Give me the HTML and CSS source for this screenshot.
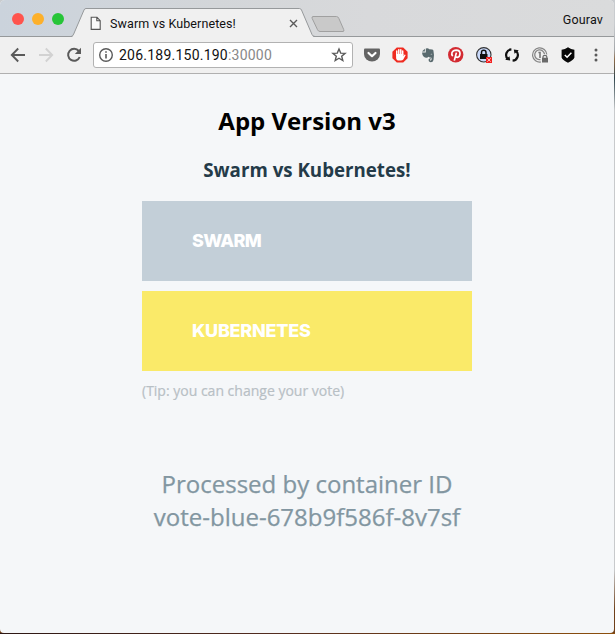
FILE: index.html
```html
<!DOCTYPE html>
<html lang="en">
<head>
<meta charset="utf-8">
<title>Swarm vs Kubernetes!</title>
<link rel="stylesheet" href="styles.css">
</head>
<body>
<div class="window">
  <header class="tabstrip">
    <div class="lights"><i class="light red"></i><i class="light amber"></i><i class="light green"></i></div>
    <div class="tab">
      <svg class="tab-shape" width="244" height="29" viewBox="0 0 244 29"><path d="M1 29Q2 28 3 25.5L13 2Q13.5 .5 15 .5H228.4Q229.8 .5 230.5 2L241 26.5Q242 29 243 29Z" fill="#f0f0f0"/><path d="M0 28.5Q1.7 28.5 2.7 26L13 2Q13.6 .5 15 .5H228.4Q229.8 .5 230.5 2L241 26.5Q242 28.5 244 28.5" fill="none" stroke="#96999b"/></svg>
      <svg class="page-icon" width="12" height="15" viewBox="0 0 12 15"><path d="M1.2 1.2H7L10.2 4.6V13.4H1.2ZM6.8 1.2V4.8H10.2" fill="#fafafa" stroke="#555" stroke-width="1.1"/></svg>
      <span class="tab-title">Swarm vs Kubernetes!</span>
      <svg class="close" width="9" height="9" viewBox="0 0 9 9"><path d="M1 1L8 8M8 1L1 8" stroke="#5a5a5a" stroke-width="1.4"/></svg>
    </div>
    <svg class="new-tab" width="35" height="17" viewBox="0 0 35 17"><path d="M2 .5H25.5Q27 .5 27.8 2.3L32.7 13.5Q33.5 15.5 32 15.5H9Q7.3 15.5 6.5 13.7L1.2 2.5Q.5 .5 2 .5Z" fill="#c9c9c9" stroke="#a0a0a0"/></svg>
    <span class="profile">Gourav</span>
  </header>
  <nav class="toolbar">
    <svg class="nav-icon" width="28" height="20" viewBox="0 0 28 20"><path d="M25 10H12M18.2 3.5L11.8 10L18.2 16.5" fill="none" stroke="#5a5a5a" stroke-width="1.9"/></svg>
    <svg class="nav-icon" width="28" height="20" viewBox="0 0 28 20"><path d="M11 10H24M17.8 3.5L24.2 10L17.8 16.5" fill="none" stroke="#d2d2d2" stroke-width="1.9"/></svg>
    <svg class="nav-icon" width="28" height="20" viewBox="0 0 28 20"><path d="M22.8 6A6 6 0 1 0 23.7 12" fill="none" stroke="#5a5a5a" stroke-width="2"/><path d="M25 2.8V9H18.8Z" fill="#5a5a5a"/></svg>
    <div class="address">
      <svg width="16" height="16" viewBox="0 0 16 16"><circle cx="8" cy="8" r="6.3" fill="none" stroke="#5a5a5a" stroke-width="1.4"/><path d="M8 7V11.5M8 4.2V5.8" stroke="#5a5a5a" stroke-width="1.6"/></svg>
      <span class="url"><span class="host">206.189.150.190</span><span class="port">:30000</span></span>
      <svg class="star" width="16" height="16" viewBox="0 0 16 16"><path d="M8 2L9.7 6.1L14.1 6.4L10.7 9.2L11.8 13.5L8 11.2L4.2 13.5L5.3 9.2L1.9 6.4L6.3 6.1Z" fill="none" stroke="#5a5a5a" stroke-width="1.4"/></svg>
    </div>
    <div class="extensions">
      <svg width="16" height="16" viewBox="0 0 16 16"><path d="M1 1.5H15Q16 1.5 16 2.5V7A8 7.5 0 0 1 0 7V2.5Q0 1.5 1 1.5Z" fill="#646464"/><path d="M4.5 6L8 9.2L11.5 6" fill="none" stroke="#fff" stroke-width="2.2" stroke-linecap="round" stroke-linejoin="round"/></svg>
      <svg width="16" height="16" viewBox="0 0 16 16"><path d="M4.8 .4H11.2L15.6 4.8V11.2L11.2 15.6H4.8L.4 11.2V4.8Z" fill="#ef2b20"/><path d="M4.8 8V4.1M6.8 8V2.8M8.8 8V2.8M10.7 8V4" stroke="#fff" stroke-width="1.5" stroke-linecap="round"/><path d="M4.1 7H11.4V9.2L12.7 7.4L13.7 8L11.3 12.5Q10.5 13.6 8.8 13.6H7Q4.1 13.6 4.1 10.8Z" fill="#fff"/></svg>
      <svg width="16" height="16" viewBox="0 0 16 16"><path d="M5.8 1.5Q8.3 .8 9.2 2.2Q13.1 2.1 13.4 3.5Q14.6 8.5 13.5 13Q13 15.3 10.7 15.2Q8.4 15.1 8.5 12.8Q8.6 11.1 10.9 11.2V12.3Q9.8 12.2 9.9 13Q10 13.8 11 13.5Q11.9 13 11.5 10.8Q9.4 10.8 8.5 9.7Q7.8 11 6 10.8Q2.6 10.5 2 5.5H5.8Z" fill="#596a6e"/><path d="M2 4.6L4.9 1.7V4.6Z" fill="#596a6e"/><path d="M10.4 7.3Q11.5 6 12.4 7.4Z" fill="#eee"/></svg>
      <svg width="16" height="16" viewBox="0 0 16 16"><circle cx="7.7" cy="7.8" r="7.7" fill="#d32b32"/><path d="M4.8 9Q3.2 7.6 4 5.5Q5.1 3.1 8.2 3.1Q12 3.2 12 6.5Q11.8 10.2 9.3 10.3Q7.9 10.3 7.5 9.3M8.4 5.6L6.3 13.6" fill="none" stroke="#fff" stroke-width="1.7"/></svg>
      <svg width="16" height="16" viewBox="0 0 16 16"><circle cx="7.8" cy="7.8" r="7.2" fill="#c9d9fa" stroke="#333" stroke-width="1.1"/><path d="M5.5 8V5.4Q5.5 3.2 7.7 3.2Q10 3.2 10 5.4V8" fill="none" stroke="#111" stroke-width="1.5"/><path d="M4 7H11.5V12H4Z" fill="#111"/><path d="M10 10H16V16H10Z" fill="#f32222"/><path d="M11.3 11.3L14.7 14.7M14.7 11.3L11.3 14.7" stroke="#ffd0c8" stroke-width=".9"/></svg>
      <svg width="16" height="16" viewBox="0 0 16 16"><path d="M7.4 2.3A5.7 5.7 0 0 0 3.8 12M8.6 13.7A5.7 5.7 0 0 0 12.2 4" fill="none" stroke="#111" stroke-width="2.2"/><path d="M1.2 12.8L6.2 13.5L5.5 9.2ZM14.8 3.2L9.8 2.5L10.5 6.8Z" fill="#111"/></svg>
      <svg width="16" height="16" viewBox="0 0 16 16"><path d="M9 15A7.1 7.1 0 1 1 14.8 7.5" fill="none" stroke="#858585" stroke-width="1.2"/><path d="M8.5 12.6A4.9 4.9 0 1 1 12.5 7.2" fill="none" stroke="#858585" stroke-width="1.3"/><path d="M6.4 4.8H8.8V11H7.2V6.2H6.4Z" fill="#777"/><path d="M11 11V9.8Q11 8.4 12.9 8.4Q14.8 8.4 14.8 9.8V11" fill="none" stroke="#6a6a6a" stroke-width="1.2"/><path d="M10 10.8H16V15.6H10Z" fill="#6a6a6a"/></svg>
      <svg width="16" height="16" viewBox="0 0 16 16"><path d="M8 .2Q11 2.3 14.4 2.7V10.5Q14.3 12.6 8 15.8Q1.7 12.6 1.6 10.5V2.7Q5 2.3 8 .2Z" fill="#080808"/><path d="M4.8 8L7.1 10.2L11.4 5.8" fill="none" stroke="#fff" stroke-width="1.5"/></svg>
      <svg width="16" height="16" viewBox="0 0 16 16"><g fill="#5a5a5a"><circle cx="8" cy="3" r="1.5"/><circle cx="8" cy="8" r="1.5"/><circle cx="8" cy="13" r="1.5"/></g></svg>
    </div>
  </nav>
  <main class="content">
    <h1>App Version v3</h1>
    <h2>Swarm vs Kubernetes!</h2>
    <div class="choices">
      <button class="choice swarm">SWARM</button>
      <button class="choice kubernetes">KUBERNETES</button>
      <p class="tip">(Tip: you can change your vote)</p>
    </div>
    <p class="container-id">Processed by container ID<br>vote-blue-678b9f586f-8v7sf</p>
  </main>
</div>
</body>
</html>
```
FILE: styles.css
```css
* { box-sizing: border-box; }
body {
  margin: 0;
  width: 615px;
  height: 634px;
  overflow: hidden;
  background: linear-gradient(#c9cccf 0 24px, #a4a7aa 50px, #8c6a48 60px, #31464d 78px, #c8cacc 110px, #c8cacc 570px, #70401a 610px);
}
body::after {
  content: "";
  display: block;
  height: 1px;
  background: linear-gradient(90deg, #2d1714, #542d20 45%, #8d500d);
}
.window {
  width: 614px;
  height: 633px;
  overflow: hidden;
  border-radius: 5px 5px 4px 4px;
  background: #f5f7f9;
}
.tabstrip {
  display: flex;
  height: 37px;
  border-bottom: 1px solid #96999b;
  background: linear-gradient(90deg, #cbd3dc, #d3d6d9 35%, #d8d9db 60%, #dadbdc);
  font: 12px Roboto, sans-serif;
}
.lights { display: flex; gap: 8px; padding: 13px 0 0 12px; width: 71px; }
.light { width: 12px; height: 12px; border-radius: 50%; }
.red { background: #ff544d; }
.amber { background: #fdb02a; }
.green { background: #27c538; }
.tab {
  position: relative;
  display: flex;
  align-items: center;
  width: 244px;
  height: 28px;
  margin-top: 8px;
  padding: 0 17px 0 19px;
}
.tab-shape { position: absolute; left: 0; top: 0; }
.page-icon, .tab-title, .close { position: relative; top: 1px; }
.tab-title {
  margin-left: 8px;
  color: #111;
  white-space: nowrap;
  font-size: 12.5px;
  letter-spacing: .1px;
}
.close { margin-left: auto; }
.new-tab { margin: 16px 0 0 -4px; }
.profile { margin: 12px 11px 0 auto; color: #111; font-size: 12.5px; letter-spacing: .15px; }
.toolbar {
  display: flex;
  align-items: center;
  height: 37px;
  border-bottom: 1px solid #b0b0b0;
  background: #f0f0f0;
}
.nav-icon { flex: none; }
.address {
  display: flex;
  align-items: center;
  width: 260px;
  height: 26px;
  margin-left: 9px;
  padding: 0 5px 0 4px;
  border: 1px solid #b2b2b2;
  border-radius: 3px;
  background: #fff;
}
.url { margin-left: 5px; font: 14px Roboto, sans-serif; letter-spacing: .23px; white-space: nowrap; }
.host { color: #111; }
.port { color: #888; }
.star { margin-left: auto; }
.extensions { display: flex; gap: 12px; margin-left: 11px; }
.content {
  display: flex;
  flex-direction: column;
  align-items: center;
  font-family: "Open Sans", sans-serif;
  text-align: center;
}
h1 { margin: 30px 0 0; font-size: 24px; line-height: 34px; color: #000; }
h2 { margin: 18px 0 0; font-size: 18.72px; line-height: 28px; color: #243b49; }
.choices { display: flex; flex-direction: column; gap: 10px; width: 330px; margin-top: 17px; }
.choice {
  height: 80px;
  padding: 0 50px 2px;
  border: 0;
  color: #fff;
  font: 800 18px Inter, sans-serif;
  text-align: left;
}
.swarm { background: #c3cfd8; letter-spacing: -.65px; }
.kubernetes { background: #faea69; letter-spacing: -.25px; }
.tip {
  margin: 0;
  text-align: left;
  font-size: 14px;
  line-height: 20px;
  color: #b8c0c5;
  -webkit-text-stroke: .2px #b8c0c5;
}
.container-id {
  margin: 66px 0 0;
  font-size: 24px;
  line-height: 33px;
  color: #8296a1;
  -webkit-text-stroke: .25px #8296a1;
}
```
